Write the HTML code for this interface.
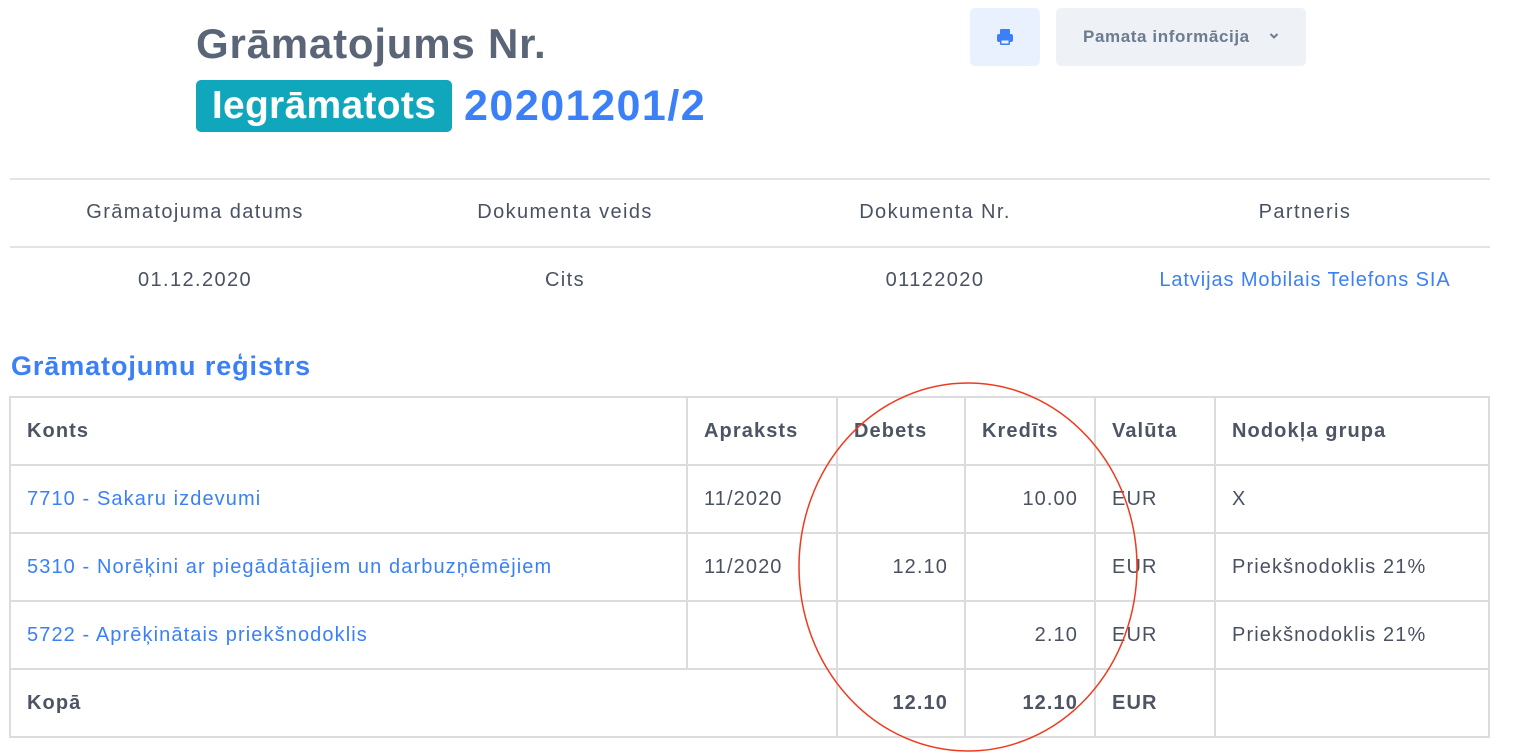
<!DOCTYPE html>
<html><head><meta charset="utf-8"><style>
*{margin:0;padding:0;box-sizing:border-box}
body{width:1532px;height:754px;background:#fff;font-family:"Liberation Sans",sans-serif;position:relative;overflow:hidden;color:#4a5262}
.abs{position:absolute}
h1{position:absolute;left:196px;top:20px;font-size:42px;font-weight:bold;color:#5a6678;line-height:48px;letter-spacing:0.8px}
.badge{position:absolute;left:196px;top:80px;width:256px;height:52px;background:#10a6bc;border-radius:5px;color:#fff;font-size:39px;font-weight:bold;line-height:52px;text-align:center;letter-spacing:0.3px}
.num{position:absolute;left:464px;top:80px;font-size:43px;font-weight:bold;color:#3b80f6;line-height:52px;letter-spacing:1.5px}
.btn1{left:970px;top:8px;width:70px;height:58px;background:#eaf1fe;border-radius:5px}
.btn2{left:1056px;top:8px;width:250px;height:58px;background:#eef1f5;border-radius:5px;color:#6d7b90;font-weight:bold;font-size:17px;line-height:58px;padding-left:27px;letter-spacing:0.6px}
.hl{left:10px;width:1480px;height:2px;background:#e2e4e8}
.c{position:absolute;width:370px;text-align:center;font-size:20px;letter-spacing:1.4px}
.sec{left:11px;top:351px;font-size:27px;font-weight:bold;color:#3b80f6;letter-spacing:0.9px}
table{position:absolute;left:9px;top:396px;border-collapse:collapse;font-size:20px;letter-spacing:1.1px;table-layout:fixed}
td{border:2px solid #dcdcdc;height:68px;padding:0 16px;vertical-align:middle;white-space:nowrap}
tr:first-child td,.b td{font-weight:bold;color:#4d5565}
a{color:#3b80f6;text-decoration:none}
.r{text-align:right}
</style></head><body>
<h1>Grāmatojums Nr.</h1>
<div class="badge">Iegrāmatots</div>
<div class="num">20201201/2</div>
<div class="abs btn1"><svg class="abs" style="left:26px;top:20px" width="18" height="18" viewBox="0 0 18 18"><rect x="4" y="1" width="10" height="6" rx="1" fill="#3b80f6"/><rect x="1" y="6" width="16" height="8" rx="2" fill="#3b80f6"/><rect x="4" y="11" width="10" height="6" rx="1" fill="#3b80f6"/><rect x="5.5" y="12.5" width="7" height="3" fill="#eaf1fe"/></svg></div>
<div class="abs btn2">Pamata informācija</div>
<svg class="abs" style="left:1269px;top:32px" width="10" height="8" viewBox="0 0 10 8"><path d="M1.5 2 L5 5.5 L8.5 2" fill="none" stroke="#6d7b90" stroke-width="2"/></svg>
<div class="abs hl" style="top:178px"></div>
<div class="abs hl" style="top:246px"></div>
<div class="c" style="left:10px;top:201px">Grāmatojuma datums</div>
<div class="c" style="left:380px;top:201px">Dokumenta veids</div>
<div class="c" style="left:750px;top:201px">Dokumenta Nr.</div>
<div class="c" style="left:1120px;top:201px">Partneris</div>
<div class="c" style="left:10px;top:269px">01.12.2020</div>
<div class="c" style="left:380px;top:269px">Cits</div>
<div class="c" style="left:750px;top:269px">01122020</div>
<div class="c" style="left:1120px;top:269px;letter-spacing:0.9px"><a>Latvijas Mobilais Telefons SIA</a></div>
<div class="abs sec">Grāmatojumu reģistrs</div>
<table>
<tr><td style="width:677px">Konts</td><td style="width:150px">Apraksts</td><td style="width:128px">Debets</td><td style="width:130px">Kredīts</td><td style="width:120px">Valūta</td><td style="width:274px">Nodokļa grupa</td></tr>
<tr><td><a>7710 - Sakaru izdevumi</a></td><td>11/2020</td><td></td><td class="r">10.00</td><td>EUR</td><td>X</td></tr>
<tr><td><a>5310 - Norēķini ar piegādātājiem un darbuzņēmējiem</a></td><td>11/2020</td><td class="r">12.10</td><td></td><td>EUR</td><td>Priekšnodoklis 21%</td></tr>
<tr><td><a>5722 - Aprēķinātais priekšnodoklis</a></td><td></td><td></td><td class="r">2.10</td><td>EUR</td><td>Priekšnodoklis 21%</td></tr>
<tr class="b"><td style="border-right:none">Kopā</td><td style="border-left:none"></td><td class="r">12.10</td><td class="r">12.10</td><td>EUR</td><td></td></tr>
</table>
<svg class="abs" style="left:0;top:0" width="1532" height="754"><ellipse cx="968" cy="567" rx="169" ry="184" fill="none" stroke="#ee3a1e" stroke-width="1.5"/></svg>
</body></html>
